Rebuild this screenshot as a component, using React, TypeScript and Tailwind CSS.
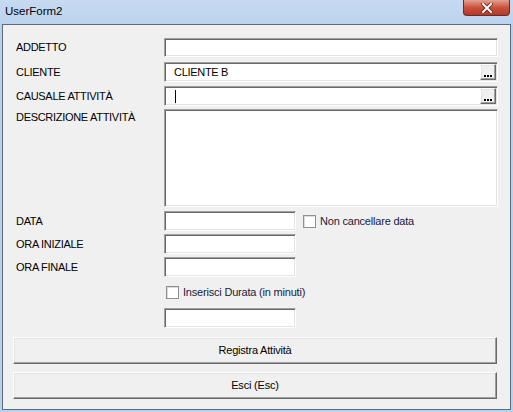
import { ReactNode } from "react";

const font = { fontFamily: '"Liberation Sans", Arial, sans-serif' };

// sunken 3D edit box, classic VBA look
const sunken =
  "bg-white border-t border-l border-[#a0a0a0] border-b border-r border-b-white border-r-white shadow-[inset_1px_1px_0_#696969,inset_-1px_-1px_0_#e3e3e3]";

const raised =
  "bg-[#f0f0f0] border-t border-l border-white border-b border-r border-b-[#696969] border-r-[#696969] shadow-[inset_-1px_-1px_0_#a0a0a0,inset_1px_1px_0_#e3e3e3]";

function Label({ children }: { children: ReactNode }) {
  return (
    <div className="w-[161px] shrink-0 pl-[13px] text-[11px] leading-[13px] tracking-[-0.3px] text-black">
      {children}
    </div>
  );
}

function EllipsisButton() {
  return (
    <div className={`${raised} w-[16px] h-[16px] mr-[1px] flex items-end justify-center pb-[2px]`}>
      <span className="flex gap-[1px]">
        <span className="w-[2px] h-[2px] bg-black" />
        <span className="w-[2px] h-[2px] bg-black" />
        <span className="w-[2px] h-[2px] bg-black" />
      </span>
    </div>
  );
}

function CheckBox({ label }: { label: string }) {
  return (
    <div className="flex items-center gap-[4px]">
      <div className="w-[13px] h-[13px] bg-white border border-[#8f8f8f] shadow-[inset_1px_1px_0_#dcdcdc]" />
      <span className="text-[11px] leading-[13px] tracking-[-0.2px] text-[#1a1a40]">{label}</span>
    </div>
  );
}

export default function App() {
  return (
    <div className="w-[513px] h-[412px] bg-[#b9d1ea] flex flex-col" style={font}>
      {/* title bar */}
      <div className="relative h-[24px] shrink-0 bg-gradient-to-b from-[#c6daf1] to-[#bcd3ee] flex items-center pl-[5px]">
        <span className="text-[11.5px] text-black">UserForm2</span>
        <div className="absolute right-[3px] top-0 w-[47px] h-[16px] rounded-b-[4px] border border-t-0 border-[#6e2a22] bg-gradient-to-b from-[#e3a091] via-[#c9503d] to-[#b33a28] flex items-center justify-center">
          <svg width="12" height="10" viewBox="0 0 12 10">
            <path d="M2 1 L10 9 M10 1 L2 9" stroke="#5a1f18" strokeWidth="3.6" strokeLinecap="square" />
            <path d="M2 1 L10 9 M10 1 L2 9" stroke="#ffffff" strokeWidth="2" strokeLinecap="square" />
          </svg>
        </div>
      </div>

      {/* client area */}
      <div className="flex-1 mx-[2px] mb-[2px] border border-[#5a6b80] bg-[#f0f0f0] flex flex-col">
        <div className="mt-[13px] flex items-center">
          <Label>ADDETTO</Label>
          <div className={`${sunken} w-[334px] h-[19px]`} />
        </div>

        <div className="mt-[5px] flex items-center">
          <Label>CLIENTE</Label>
          <div className={`${sunken} w-[334px] h-[20px] flex items-center justify-between`}>
            <span className="pl-[9px] text-[11px] tracking-[-0.3px] text-black">CLIENTE B</span>
            <EllipsisButton />
          </div>
        </div>

        <div className="mt-[4px] flex items-center">
          <Label>CAUSALE ATTIVITÀ</Label>
          <div className={`${sunken} w-[334px] h-[20px] flex items-center justify-between`}>
            <span className="ml-[10px] w-[1px] h-[13px] bg-black" />
            <EllipsisButton />
          </div>
        </div>

        <div className="mt-[3px] flex items-start">
          <div className="pt-[2px]">
            <Label>DESCRIZIONE ATTIVITÀ</Label>
          </div>
          <div className={`${sunken} w-[334px] h-[98px]`} />
        </div>

        <div className="mt-[4px] flex items-center">
          <Label>DATA</Label>
          <div className={`${sunken} w-[132px] h-[20px]`} />
          <div className="ml-[7px]">
            <CheckBox label="Non cancellare data" />
          </div>
        </div>

        <div className="mt-[3px] flex items-center">
          <Label>ORA INIZIALE</Label>
          <div className={`${sunken} w-[132px] h-[20px]`} />
        </div>

        <div className="mt-[3px] flex items-center">
          <Label>ORA FINALE</Label>
          <div className={`${sunken} w-[132px] h-[20px]`} />
        </div>

        <div className="mt-[9px] flex items-center">
          <div className="w-[163px] shrink-0" />
          <CheckBox label="Inserisci Durata (in minuti)" />
        </div>

        <div className="mt-[9px] flex items-center">
          <div className="w-[161px] shrink-0" />
          <div className={`${sunken} w-[132px] h-[20px]`} />
        </div>

        <div className="mt-[9px] ml-[10px] flex flex-col gap-[8px]">
          <div className={`${raised} w-[484px] h-[27px] flex items-center justify-center text-[11px] tracking-[-0.2px] text-black`}>
            Registra Attività
          </div>
          <div className={`${raised} w-[484px] h-[27px] flex items-center justify-center text-[11px] tracking-[-0.2px] text-black`}>
            Esci (Esc)
          </div>
        </div>
      </div>
    </div>
  );
}
